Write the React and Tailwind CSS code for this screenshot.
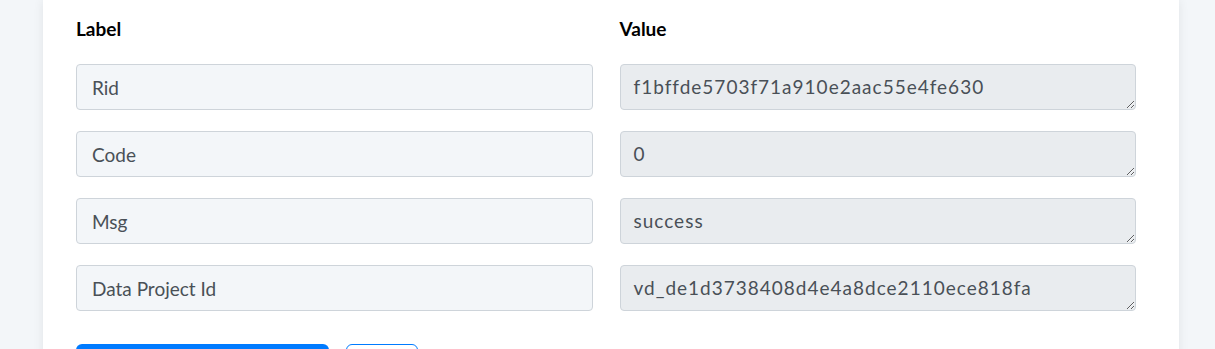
import React from "react";

const rows = [
  ["Rid", "f1bffde5703f71a910e2aac55e4fe630"],
  ["Code", "0"],
  ["Msg", "success"],
  ["Data Project Id", "vd_de1d3738408d4e4a8dce2110ece818fa"],
];

export default function App() {
  return (
    <div className="min-h-[349px] bg-[#f3f6f9] pl-[43px] pr-[36px]" style={{ fontFamily: "Lato, 'Open Sans', sans-serif" }}>
      <div className="bg-white shadow-[0_0_10px_rgba(0,0,0,0.08)] pl-[33px] pr-[43px] pt-[17px] pb-[40px]">
        <div className="grid grid-cols-2 gap-x-[27px]">
          <div className="text-[19px] leading-[24px] font-bold text-black">Label</div>
          <div className="text-[19px] leading-[24px] font-bold text-black">Value</div>
        </div>
        <div className="mt-[23px] flex flex-col gap-[21px]">
          {rows.map(([l, v]) => (
            <div key={l} className="grid grid-cols-2 gap-x-[27px]">
              <input
                readOnly
                value={l}
                className="h-[46px] w-full rounded-[4px] border border-[#ced4da] bg-[#f3f6f9] px-[15px] text-[19px] text-[#495057] outline-none"
              />
              <textarea
                readOnly
                rows={1}
                value={v}
                className="h-[46px] w-full rounded-[4px] border border-[#ced4da] bg-[#e9ecef] px-[13px] py-[9px] text-[19px] leading-[26px] tracking-[1px] text-[#495057] outline-none resize-y overflow-hidden"
              />
            </div>
          ))}
        </div>
        <div className="mt-[33px] flex gap-[17px]">
          <button className="h-[46px] w-[253px] rounded-[6px] bg-[#007bff] text-white text-[18px]">Submit</button>
          <button className="h-[46px] w-[72px] rounded-[6px] border border-[#007bff] text-[#007bff] text-[18px]">Reset</button>
        </div>
      </div>
    </div>
  );
}
